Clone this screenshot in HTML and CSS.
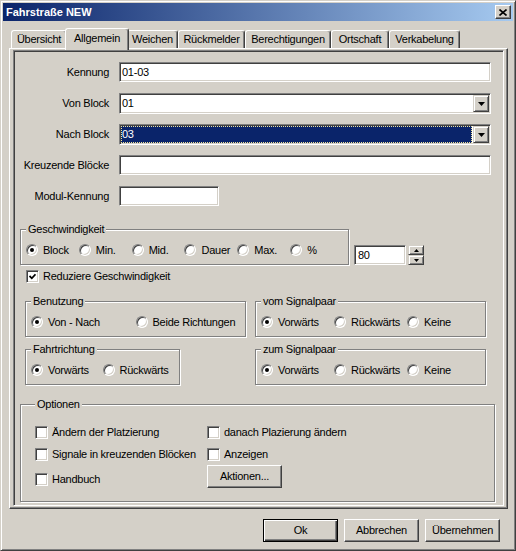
FILE: index.html
```html
<!DOCTYPE html>
<html>
<head>
<meta charset="utf-8">
<link rel="stylesheet" href="styles.css">
</head>
<body>
<div class="window">
  <div class="titlebar">
    <span class="title">Fahrstraße NEW</span>
    <div class="close"><svg width="8" height="7" viewBox="0 0 8 7"><path d="M0.5 0.5L7.5 6.5M7.5 0.5L0.5 6.5" stroke="#000" stroke-width="1.6"/></svg></div>
  </div>
  <div class="body">
    <div class="tabs">
      <div class="tab">Übersicht</div>
      <div class="tab active">Allgemein</div>
      <div class="tab">Weichen</div>
      <div class="tab">Rückmelder</div>
      <div class="tab">Berechtigungen</div>
      <div class="tab">Ortschaft</div>
      <div class="tab">Verkabelung</div>
    </div>
    <div class="panel">
      <div class="page">
        <div class="form">
          <div class="row"><span class="lbl">Kennung</span><div class="field">01-03</div></div>
          <div class="row"><span class="lbl">Von Block</span><div class="combo"><div class="combo-text">01</div><div class="drop"><svg width="7" height="4" viewBox="0 0 7 4"><path d="M0 0H7L3.5 4Z" fill="#000"/></svg></div></div></div>
          <div class="row"><span class="lbl">Nach Block</span><div class="combo"><div class="combo-text sel">03</div><div class="drop"><svg width="7" height="4" viewBox="0 0 7 4"><path d="M0 0H7L3.5 4Z" fill="#000"/></svg></div></div></div>
          <div class="row"><span class="lbl">Kreuzende Blöcke</span><div class="field"></div></div>
          <div class="row"><span class="lbl">Modul-Kennung</span><div class="field short"></div></div>
        </div>

        <div class="speed-row">
          <fieldset class="group speed">
            <legend>Geschwindigkeit</legend>
            <div class="radios w54">
              <div class="ritem"><span class="radio on"></span>Block</div>
              <div class="ritem"><span class="radio"></span>Min.</div>
              <div class="ritem"><span class="radio"></span>Mid.</div>
              <div class="ritem"><span class="radio"></span>Dauer</div>
              <div class="ritem"><span class="radio"></span>Max.</div>
              <div class="ritem"><span class="radio"></span>%</div>
            </div>
          </fieldset>
          <div class="spin">
            <div class="field spin-field">80</div>
            <div class="spin-btns">
              <div class="spin-btn"><svg width="5" height="3" viewBox="0 0 5 3"><path d="M2.5 0L5 3H0Z" fill="#000"/></svg></div>
              <div class="spin-btn"><svg width="5" height="3" viewBox="0 0 5 3"><path d="M0 0H5L2.5 3Z" fill="#000"/></svg></div>
            </div>
          </div>
        </div>

        <div class="check reduce"><span class="box"><svg width="7" height="7" viewBox="0 0 7 7"><path d="M0.5 3L2.8 5.3L6.5 1.3" stroke="#000" stroke-width="1.8" fill="none"/></svg></span>Reduziere Geschwindigkeit</div>

        <div class="groups">
          <fieldset class="group g-benutzung">
            <legend>Benutzung</legend>
            <div class="radios w108">
              <div class="ritem"><span class="radio on"></span>Von - Nach</div>
              <div class="ritem"><span class="radio"></span>Beide Richtungen</div>
            </div>
          </fieldset>
          <fieldset class="group g-signal">
            <legend>vom Signalpaar</legend>
            <div class="radios w75">
              <div class="ritem"><span class="radio on"></span>Vorwärts</div>
              <div class="ritem"><span class="radio"></span>Rückwärts</div>
              <div class="ritem"><span class="radio"></span>Keine</div>
            </div>
          </fieldset>
          <fieldset class="group g-fahrt">
            <legend>Fahrtrichtung</legend>
            <div class="radios w75">
              <div class="ritem"><span class="radio on"></span>Vorwärts</div>
              <div class="ritem"><span class="radio"></span>Rückwärts</div>
            </div>
          </fieldset>
          <fieldset class="group g-signal">
            <legend>zum Signalpaar</legend>
            <div class="radios w75">
              <div class="ritem"><span class="radio on"></span>Vorwärts</div>
              <div class="ritem"><span class="radio"></span>Rückwärts</div>
              <div class="ritem"><span class="radio"></span>Keine</div>
            </div>
          </fieldset>
        </div>

        <fieldset class="group options">
          <legend>Optionen</legend>
          <div class="opt-col left">
            <div class="check"><span class="box"></span>Ändern der Platzierung</div>
            <div class="check"><span class="box"></span>Signale in kreuzenden Blöcken</div>
            <div class="check handbuch"><span class="box"></span>Handbuch</div>
          </div>
          <div class="opt-col">
            <div class="check"><span class="box"></span>danach Plazierung ändern</div>
            <div class="check"><span class="box"></span>Anzeigen</div>
            <div class="btn aktionen">Aktionen...</div>
          </div>
        </fieldset>
      </div>
    </div>
    <div class="buttons">
      <div class="btn default">Ok</div>
      <div class="btn">Abbrechen</div>
      <div class="btn">Übernehmen</div>
    </div>
  </div>
</div>
</body>
</html>
```

FILE: styles.css
```css
* { box-sizing: border-box; }

body {
  margin: 0;
  background: #d4d0c8;
  font: 11px/13px "Liberation Sans", Arial, sans-serif;
  letter-spacing: -0.25px;
  color: #000;
}

.window {
  width: 516px;
  height: 551px;
  border: 1px solid;
  border-color: #d4d0c8 #404040 #404040 #d4d0c8;
  box-shadow: inset 1px 1px #fff, inset -1px -1px #808080;
  padding: 2px;
  background: #d4d0c8;
  display: flex;
  flex-direction: column;
}

.titlebar {
  height: 18px;
  display: flex;
  align-items: center;
  justify-content: space-between;
  background: linear-gradient(to right, #0a246a, #a6caf0);
  padding: 0 2px 0 3px;
}

.title {
  color: #fff;
  font-weight: bold;
  letter-spacing: 0;
}

.close {
  width: 16px;
  height: 14px;
  border: 1px solid;
  border-color: #fff #404040 #404040 #fff;
  box-shadow: inset -1px -1px #808080;
  background: #d4d0c8;
  display: flex;
  align-items: center;
  justify-content: center;
}

.body {
  flex: 1;
  padding: 7px 5px 0 6px;
  display: flex;
  flex-direction: column;
}

.tabs {
  display: grid;
  grid-template-columns: 56px 60px 51px 67px 86px 58px 71px;
  height: 20px;
  align-items: end;
  margin-left: 2px;
}

.tab {
  height: 18px;
  border: 1px solid;
  border-color: #fff #404040 transparent #fff;
  border-bottom: none;
  box-shadow: inset -1px 0 #808080;
  border-radius: 3px 3px 0 0;
  text-align: center;
  line-height: 16px;
  white-space: nowrap;
}

.tab.active {
  height: 22px;
  margin: 0 -2px -2px;
  position: relative;
  z-index: 1;
  background: #d4d0c8;
  line-height: 19px;
}

.panel {
  width: 499px;
  height: 461px;
  border: 1px solid;
  border-color: #fff #404040 #404040 #fff;
  box-shadow: inset -1px -1px #808080;
  padding: 1px 3px 2px 3px;
  display: flex;
}

.page {
  flex: 1;
  border: 1px solid;
  border-color: #808080 #fff #fff #808080;
  box-shadow: inset 1px 1px #404040, inset -1px -1px #d4d0c8;
}

.form {
  padding-top: 11px;
  display: flex;
  flex-direction: column;
  gap: 11px;
}

.row {
  display: flex;
  height: 20px;
  align-items: flex-start;
}

.lbl {
  width: 95px;
  margin-right: 10px;
  text-align: right;
  line-height: 20px;
  white-space: nowrap;
}

.field {
  width: 372px;
  height: 20px;
  border: 1px solid;
  border-color: #808080 #fff #fff #808080;
  box-shadow: inset 1px 1px #404040, inset -1px -1px #d4d0c8;
  background: #fff;
  padding: 0 2px;
  line-height: 18px;
}

.field.short { width: 100px; }

.combo {
  width: 372px;
  height: 21px;
  border: 1px solid;
  border-color: #808080 #fff #fff #808080;
  box-shadow: inset 1px 1px #404040, inset -1px -1px #d4d0c8;
  background: #fff;
  padding: 1px;
  display: flex;
  gap: 1px;
}

.combo-text {
  flex: 1;
  padding-left: 1px;
  line-height: 17px;
}

.combo-text.sel {
  background: #0a246a;
  color: #fff;
  outline: 1px dotted #f0e39a;
  outline-offset: -1px;
}

.drop, .spin-btn {
  width: 16px;
  border: 1px solid;
  border-color: #d4d0c8 #404040 #404040 #d4d0c8;
  box-shadow: inset 1px 1px #fff, inset -1px -1px #808080;
  background: #d4d0c8;
  display: flex;
  align-items: center;
  justify-content: center;
}

.speed-row {
  display: flex;
  align-items: flex-end;
  margin: 17px 0 0 6px;
}

.group {
  margin: 0;
  border: 1px solid #808080;
  box-shadow: inset 1px 1px #fff, 1px 1px #fff;
  padding: 7px 5px 7px;
  min-width: 0;
}

.group legend {
  padding: 0 2px;
  line-height: 13px;
  background: #d4d0c8;
}

.speed { width: 329px; }

.radios {
  display: flex;
  height: 14px;
  align-items: center;
}

.ritem {
  display: flex;
  align-items: center;
  white-space: nowrap;
}

.w54 .ritem { width: 54px; }
.w75 .ritem { width: 75px; }
.w108 .ritem { width: 108px; }

.radio {
  width: 12px;
  height: 12px;
  flex: none;
  border-radius: 50%;
  border: 1px solid;
  border-color: #808080 #fff #fff #808080;
  box-shadow: inset 1px 1px #404040, inset -1px -1px #d4d0c8;
  background: #fff;
  margin-right: 5px;
  display: flex;
  align-items: center;
  justify-content: center;
}

.radio.on::after {
  content: "";
  width: 4px;
  height: 4px;
  border-radius: 50%;
  background: #000;
}

.spin {
  display: flex;
  gap: 2px;
  margin-left: 5px;
}

.spin-field {
  width: 52px;
  padding-left: 3px;
}

.spin-btns {
  display: flex;
  flex-direction: column;
}

.spin-btn { height: 10px; }

.check {
  display: flex;
  align-items: center;
  height: 13px;
  white-space: nowrap;
}

.box {
  width: 13px;
  height: 13px;
  flex: none;
  border: 1px solid;
  border-color: #808080 #fff #fff #808080;
  box-shadow: inset 1px 1px #404040, inset -1px -1px #d4d0c8;
  background: #fff;
  margin-right: 4px;
  display: flex;
  align-items: center;
  justify-content: center;
}

.reduce { margin: 5px 0 0 12px; }

.groups {
  display: grid;
  grid-template-columns: 230px 231px;
  row-gap: 6px;
  margin: 12px 0 0 11px;
  justify-items: start;
}

.g-benutzung { width: 221px; }
.g-fahrt { width: 155px; }
.g-signal { width: 231px; }

.options {
  display: flex;
  width: 475px;
  margin: 13px 0 0 6px;
  padding: 15px 5px 13px 14px;
}

.opt-col {
  display: flex;
  flex-direction: column;
  gap: 9px;
}

.opt-col.left { width: 172px; }

.handbuch { margin-top: 3px; }

.btn {
  width: 75px;
  height: 23px;
  border: 1px solid;
  border-color: #fff #404040 #404040 #fff;
  box-shadow: inset -1px -1px #808080;
  display: flex;
  align-items: center;
  justify-content: center;
  white-space: nowrap;
}

.btn.default {
  border-color: #000;
  box-shadow: inset 1px 1px #fff, inset -1px -1px #404040, inset -2px -2px #808080;
}

.aktionen { margin-top: -5px; }

.buttons {
  display: flex;
  justify-content: flex-end;
  gap: 6px;
  margin-top: 10px;
  padding-right: 8px;
}
```
